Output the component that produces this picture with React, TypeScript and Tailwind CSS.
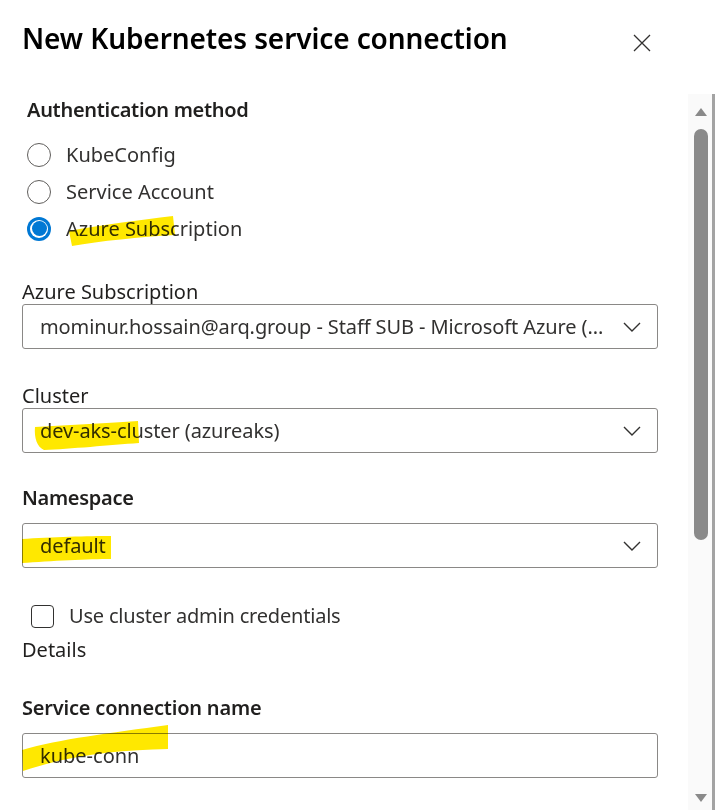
import React from "react";

const Chevron = () => (
  <svg width="18" height="10" viewBox="0 0 18 10" fill="none">
    <path d="M1 1 L9 9 L17 1" stroke="#323130" strokeWidth="1.4" />
  </svg>
);

const Select = ({ value, mt }: { value: string; mt: string }) => (
  <div
    className={`${mt} flex h-[45px] w-[636px] items-center justify-between rounded-[3px] border border-[#8a8886] pl-[17px] pr-[16px]`}
  >
    <span className="truncate text-[20px] tracking-[-0.1px] text-[#323130]">{value}</span>
    <Chevron />
  </div>
);

const Radio = ({ label, checked }: { label: string; checked?: boolean }) => (
  <div className="flex h-[37px] items-center">
    {checked ? (
      <div className="flex h-[24px] w-[24px] items-center justify-center rounded-full bg-[#0078d4]">
        <div className="flex h-[18px] w-[18px] items-center justify-center rounded-full bg-white">
          <div className="h-[15px] w-[15px] rounded-full bg-[#0078d4]" />
        </div>
      </div>
    ) : (
      <div className="h-[24px] w-[24px] rounded-full border border-[#605e5c] bg-white" />
    )}
    <span className="ml-[15px] mt-[1px] text-[20px] text-[#323130]">{label}</span>
  </div>
);

export default function App() {
  return (
    <div
      className="relative h-[810px] w-[715px] overflow-hidden bg-white"
      style={{ fontFamily: '"Noto Sans", "Open Sans", sans-serif' }}
    >
      {/* Header */}
      <div className="flex h-[94px] items-start justify-between pl-[22px] pr-[64px]">
        <h1 className="mt-[18px] text-[28px] font-semibold leading-[40px] tracking-[-0.1px] text-black">
          New Kubernetes service connection
        </h1>
        <svg className="mt-[34px]" width="18" height="18" viewBox="0 0 18 18" fill="none">
          <path d="M1 1 L17 17 M17 1 L1 17" stroke="#323130" strokeWidth="1.3" />
        </svg>
      </div>

      {/* Body */}
      <div className="flex h-[716px]">
        <div className="w-[666px] pl-[22px]">
          <div className="mt-[2px] pl-[5px] text-[20px] font-semibold leading-[28px] tracking-[-0.3px] text-[#201f1e]">
            Authentication method
          </div>
          <div className="mt-[12px] pl-[5px]">
            <Radio label="KubeConfig" />
            <Radio label="Service Account" />
            <Radio label="Azure Subscription" checked />
          </div>

          <div className="mt-[32px] text-[20px] leading-[25px] text-[#201f1e]">Azure Subscription</div>
          <Select value="mominur.hossain@arq.group - Staff SUB - Microsoft Azure (..." mt="mt-0" />

          <div className="mt-[34px] text-[20px] leading-[25px] text-[#201f1e]">Cluster</div>
          <Select value="dev-aks-cluster (azureaks)" mt="mt-0" />

          <div className="mt-[32px] text-[20px] font-semibold leading-[26px] tracking-[-0.3px] text-[#201f1e]">
            Namespace
          </div>
          <Select value="default" mt="mt-[12px]" />

          <div className="mt-[33px] flex h-[30px] items-center pl-[9px]">
            <div className="h-[23px] w-[23px] rounded-[4px] border border-[#323130] bg-white" />
            <span className="ml-[15px] text-[20px] tracking-[-0.2px] text-[#323130]">
              Use cluster admin credentials
            </span>
          </div>
          <div className="mt-[6px] text-[20px] leading-[26px] text-[#201f1e]">Details</div>

          <div className="mt-[32px] text-[20px] font-semibold leading-[26px] tracking-[-0.2px] text-[#201f1e]">
            Service connection name
          </div>
          <div className="mt-[12px] flex h-[45px] w-[636px] items-center rounded-[3px] border border-[#8a8886] pl-[17px]">
            <span className="text-[20px] text-[#323130]">kube-conn</span>
          </div>
        </div>

        {/* Scrollbar */}
        <div className="flex w-[49px] justify-end">
          <div className="flex h-full w-[27px] bg-[#fafafa]">
            <div className="flex w-[24px] flex-col items-center pl-[1px]">
              <div className="mt-[14px] h-0 w-0 border-x-[6px] border-b-[8px] border-x-transparent border-b-[#8a8a8a]" />
              <div className="mt-[13px] h-[411px] w-[14px] rounded-full bg-[#8a8a8a]" />
              <div className="flex-1" />
              <div className="mb-[8px] h-0 w-0 border-x-[6px] border-t-[8px] border-x-transparent border-t-[#8a8a8a]" />
            </div>
            <div className="w-[3px] bg-[#a3a3a3]" />
          </div>
        </div>
      </div>

      {/* Highlighter marks */}
      <svg
        className="pointer-events-none absolute left-0 top-0 mix-blend-multiply"
        width="715"
        height="810"
        viewBox="0 0 715 810"
      >
        <g fill="#ffe800">
          <path d="M69,231 C100,225 140,220 173,216 L175,235 C140,237 100,241 72,246 Z" />
          <path d="M35,427 C70,425 110,423 138,421 L139,443 C110,445 70,449 44,450 C37,447 34,438 35,427 Z" />
          <path d="M22,539 C50,537 90,536 111,536 L111,559 C90,559 50,561 22,563 Z" />
          <path d="M22,750 C60,739 110,733 168,725 L168,749 C120,750 70,755 23,771 Z" />
        </g>
      </svg>
    </div>
  );
}
